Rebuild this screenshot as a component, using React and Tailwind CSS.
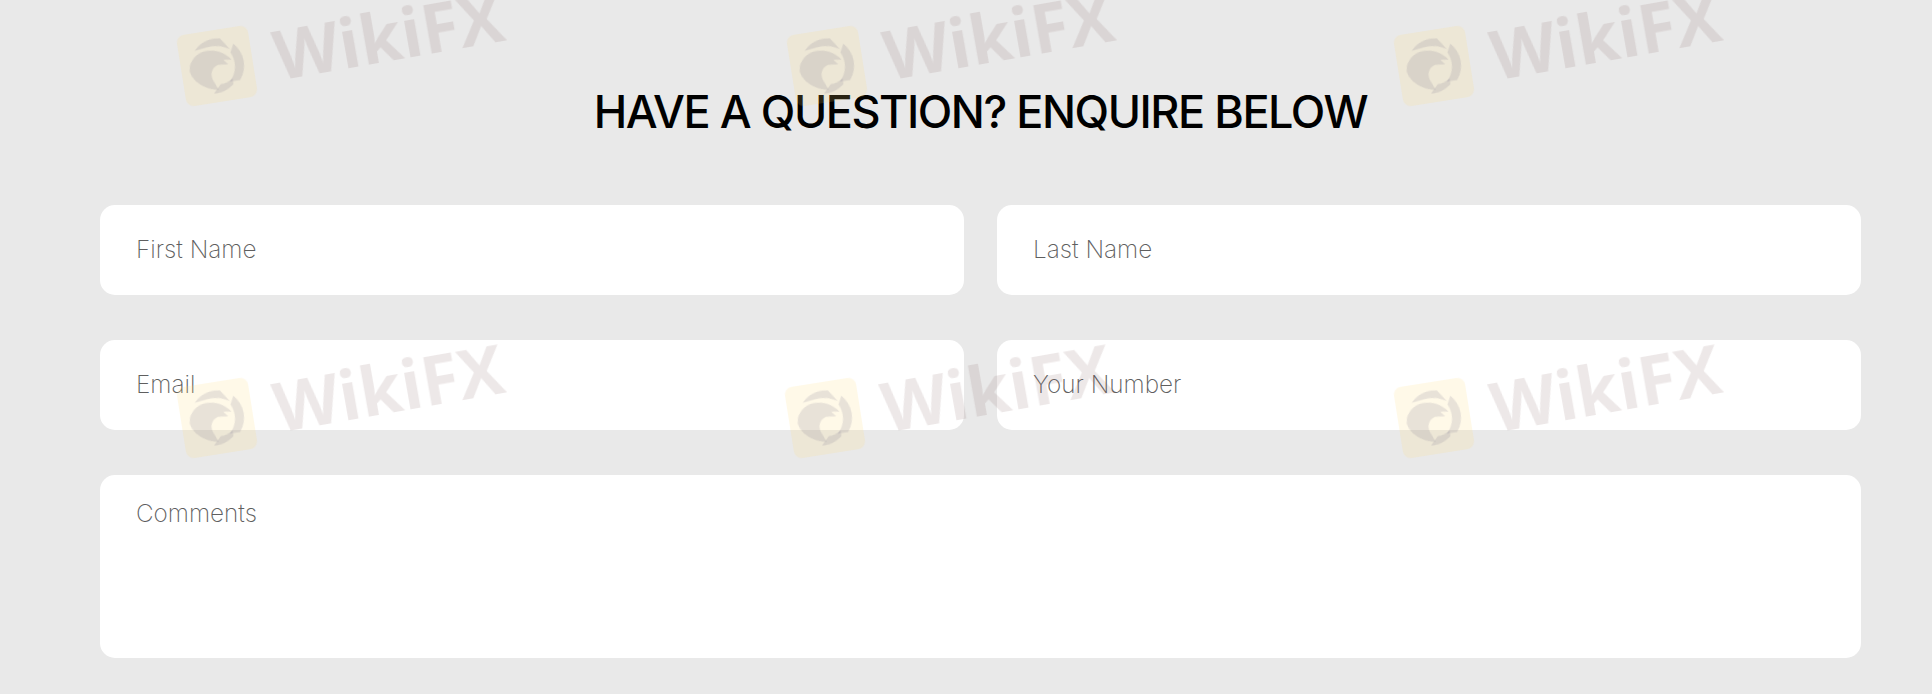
const marks = [
  "left-[170px] top-[0px]",
  "left-[780px] top-[0px]",
  "left-[1387px] top-[0px]",
  "left-[170px] top-[352px]",
  "left-[778px] top-[352px]",
  "left-[1387px] top-[352px]",
];

function Watermark({ className }) {
  return (
    <div className={`absolute w-[340px] h-[130px] ${className}`}>
      <div className="absolute left-[11px] top-[30px] w-[72px] h-[72px] rounded-[8px] rotate-[-9deg] bg-[rgba(255,215,110,0.16)] blur-[0.4px]">
        <svg viewBox="0 0 70 70" className="w-full h-full">
          <g fill="rgba(120,115,140,0.17)">
            <path d="M16 17 A27 27 0 0 1 42 9 L50 21 C44 16 34 14 24 16 Z" />
            <path d="M54 16 A27 27 0 0 1 55 52 L45 52 C52 46 55 34 50 24 Z" />
            <path d="M48 55 A27 27 0 0 1 28 61 L36 53 C40 53 44 52 48 49 Z" />
            <path d="M9 31 C12 24 19 19 27 19 C36 19 44 23 50 31 L42 30 L46 35 L36 34 C30 36 27 41 29 48 L33 58 C20 56 9 46 8 36 Z" />
          </g>
        </svg>
      </div>
      <span className="absolute left-[104px] top-[21px] origin-left rotate-[-10deg] text-[68px] leading-[68px] font-bold whitespace-nowrap text-[rgba(130,90,90,0.14)] blur-[0.4px] [font-family:'Open_Sans',sans-serif]">
        WikiFX
      </span>
    </div>
  );
}

const inputCls =
  "w-full rounded-[15px] bg-white px-[36px] text-[24.3px] font-extralight text-[#5f5f5f] placeholder:text-[#5f5f5f] placeholder:opacity-100 outline-none [font-family:Inter,sans-serif]";

export default function App() {
  return (
    <div className="relative h-[694px] overflow-hidden bg-[#e9e9e9] px-[100px] pt-[85px] [font-family:Inter,sans-serif]">
      <h2 className="pl-[29px] text-center text-[45px] leading-[54px] font-[450] text-black tracking-[-1.45px] whitespace-nowrap">
        HAVE A QUESTION? ENQUIRE BELOW
      </h2>
      <form className="mt-[66px] w-[1761px] grid grid-cols-2 gap-x-[33px] gap-y-[45px]">
        <input className={`${inputCls} h-[90px] pb-[2px]`} placeholder="First Name" />
        <input className={`${inputCls} h-[90px] pb-[2px]`} placeholder="Last Name" />
        <input className={`${inputCls} h-[90px] pb-[2px]`} placeholder="Email" />
        <input className={`${inputCls} h-[90px] pb-[2px]`} placeholder="Your Number" />
        <textarea
          className={`${inputCls} col-span-2 h-[183px] pt-[20px] resize-none block`}
          placeholder="Comments"
        />
      </form>
      <div className="pointer-events-none">
        {marks.map((m) => (
          <Watermark key={m} className={m} />
        ))}
      </div>
    </div>
  );
}
